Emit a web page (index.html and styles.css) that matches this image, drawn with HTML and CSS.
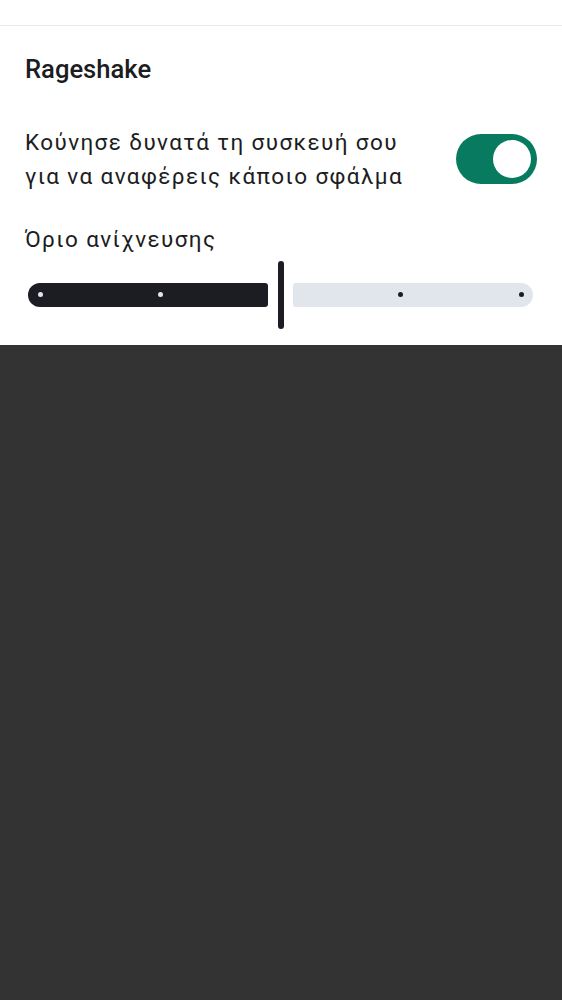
FILE: index.html
```html
<!DOCTYPE html>
<html lang="el">
<head>
<meta charset="utf-8">
<link rel="stylesheet" href="styles.css">
</head>
<body>
<div class="sheet">
  <div class="topbar"></div>
  <h2 class="title">Rageshake</h2>
  <div class="row">
    <p class="row-text">Κούνησε δυνατά τη συσκευή σου για να αναφέρεις κάποιο σφάλμα</p>
    <div class="switch"><span class="knob"></span></div>
  </div>
  <p class="label">Όριο ανίχνευσης</p>
  <div class="slider">
    <div class="track track-active"><span class="dot"></span><span class="dot"></span></div>
    <div class="thumb"></div>
    <div class="track track-inactive"><span class="dot"></span><span class="dot"></span></div>
  </div>
</div>
</body>
</html>
```

FILE: styles.css
```css
html, body {
  margin: 0;
  padding: 0;
  background: #333333;
  height: 100%;
}
body {
  font-family: Roboto, "Noto Sans", sans-serif;
  color: #1b1d22;
}
.sheet {
  background: #ffffff;
  height: 345px;
  box-sizing: border-box;
}
.topbar {
  height: 25px;
  border-bottom: 1px solid #e8e8ee;
}
.title {
  margin: 29px 25px 0;
  font-size: 25.6px;
  font-weight: 500;
  line-height: 28px;
}
.row {
  margin-top: 41.8px;
  padding: 0 25px;
  display: flex;
  align-items: center;
  justify-content: space-between;
  gap: 20px;
}
.row-text {
  margin: 0;
  font-size: 22.5px;
  line-height: 34px;
  letter-spacing: 1.4px;
  max-width: 400px;
}
.switch {
  flex: none;
  width: 81px;
  height: 50px;
  border-radius: 25px;
  background: #077a5f;
  display: flex;
  align-items: center;
  justify-content: flex-end;
  padding: 0 6px;
  box-sizing: border-box;
}
.knob {
  width: 38px;
  height: 38px;
  border-radius: 50%;
  background: #ffffff;
}
.label {
  margin: 32.2px 25px 0;
  font-size: 22.5px;
  line-height: 28px;
  letter-spacing: 1.4px;
}
.slider {
  margin-top: 8px;
  height: 68px;
  padding: 0 29px 0 28px;
  display: flex;
  align-items: center;
  gap: 9.5px;
}
.track {
  flex: 1;
  height: 24px;
  display: flex;
  align-items: center;
  box-sizing: border-box;
  gap: 115.5px;
}
.dot {
  width: 5px;
  height: 5px;
  border-radius: 50%;
}
.track-active {
  background: #1b1d22;
  border-radius: 12px 3px 3px 12px;
  padding-left: 9.5px;
}
.track-active .dot {
  background: #e1e6ec;
}
.track-inactive {
  background: #e1e6ec;
  border-radius: 3px 12px 12px 3px;
  justify-content: flex-end;
  padding-right: 9.5px;
}
.track-inactive .dot {
  background: #1b1d22;
}
.thumb {
  flex: none;
  width: 6px;
  height: 68px;
  border-radius: 3px;
  background: #1b1d22;
}
```
